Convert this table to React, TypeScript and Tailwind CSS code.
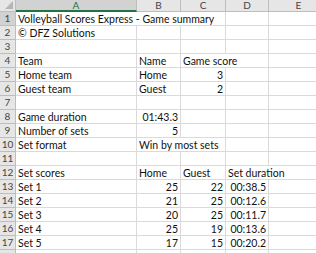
import React from 'react';

type Cell = { text?: string; span?: number; right?: boolean };

// each row lists cells for columns A..E; span lets text overflow into neighbours
const rows: Cell[][] = [
  [{ text: 'Volleyball Scores Express - Game summary', span: 3 }, {}, {}],
  [{ text: '© DFZ Solutions' }, {}, {}, {}, {}],
  [{}, {}, {}, {}, {}],
  [{ text: 'Team' }, { text: 'Name' }, { text: 'Game score', span: 2 }, {}],
  [{ text: 'Home team' }, { text: 'Home' }, { text: '3', right: true }, {}, {}],
  [{ text: 'Guest team' }, { text: 'Guest' }, { text: '2', right: true }, {}, {}],
  [{}, {}, {}, {}, {}],
  [{ text: 'Game duration' }, { text: '01:43.3', right: true }, {}, {}, {}],
  [{ text: 'Number of sets' }, { text: '5', right: true }, {}, {}, {}],
  [{ text: 'Set format' }, { text: 'Win by most sets', span: 2 }, {}, {}],
  [{}, {}, {}, {}, {}],
  [{ text: 'Set scores' }, { text: 'Home' }, { text: 'Guest' }, { text: 'Set duration', span: 2 }],
  [{ text: 'Set 1' }, { text: '25', right: true }, { text: '22', right: true }, { text: '00:38.5', right: true }, {}],
  [{ text: 'Set 2' }, { text: '21', right: true }, { text: '25', right: true }, { text: '00:12.6', right: true }, {}],
  [{ text: 'Set 3' }, { text: '20', right: true }, { text: '25', right: true }, { text: '00:11.7', right: true }, {}],
  [{ text: 'Set 4' }, { text: '25', right: true }, { text: '19', right: true }, { text: '00:13.6', right: true }, {}],
  [{ text: 'Set 5' }, { text: '17', right: true }, { text: '15', right: true }, { text: '00:20.2', right: true }, {}],
  [{}, {}, {}, {}, {}],
];

const spanClass: Record<number, string> = { 1: 'col-span-1', 2: 'col-span-2', 3: 'col-span-3' };

export default function App() {
  return (
    <div
      className="w-[316px] h-[253px] overflow-hidden bg-white text-[10.5px] text-[#111]"
      style={{ fontFamily: 'Lato, "Liberation Sans", Arial, sans-serif' }}
    >
      <div className="grid grid-cols-[16px_121px_44px_45px_43px_60px] auto-rows-[14px] grid-rows-[12px]">
        {/* header row */}
        <div className="relative bg-[#e6e6e6] border-r border-b border-[#bdbdbd]">
          <div className="absolute right-[2px] bottom-[2px] w-0 h-0 border-l-[8px] border-l-transparent border-b-[8px] border-b-[#b6b6b6]" />
        </div>
        <div className="bg-[#d2d2d2] border-r border-[#bdbdbd] border-b-2 border-b-[#217346] text-[#217346] text-[10px] flex items-center justify-center">
          A
        </div>
        {['B', 'C', 'D', 'E'].map((l) => (
          <div
            key={l}
            className="bg-[#e6e6e6] border-r border-b border-[#bdbdbd] text-[#444] text-[10px] flex items-center justify-center"
          >
            {l}
          </div>
        ))}

        {rows.map((cells, r) => (
          <React.Fragment key={r}>
            <div
              className={`border-r border-b border-[#bdbdbd] text-[#444] text-[10px] flex items-center justify-center ${
                r === 0 ? 'bg-[#d2d2d2]' : 'bg-[#e6e6e6]'
              }`}
            >
              {r < 17 ? r + 1 : ''}
            </div>
            {cells.map((c, i) => (
              <div
                key={i}
                className={`${spanClass[c.span ?? 1]} border-r border-b border-[#dadada] px-[2px] pt-[1px] flex items-center whitespace-nowrap overflow-hidden leading-none ${
                  c.right ? 'justify-end' : 'justify-start'
                }`}
              >
                {c.text}
              </div>
            ))}
          </React.Fragment>
        ))}
      </div>
    </div>
  );
}
